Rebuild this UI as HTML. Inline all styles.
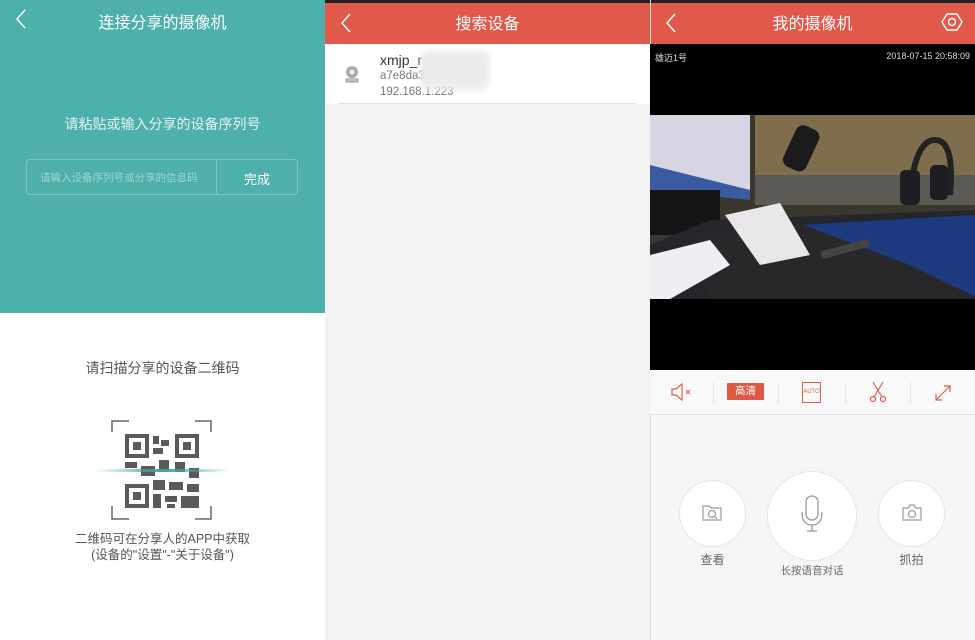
<!DOCTYPE html>
<html><head><meta charset="utf-8"><style>
*{margin:0;padding:0;box-sizing:border-box}
body{width:975px;height:640px;position:relative;overflow:hidden;font-family:"Liberation Sans","Noto Sans CJK SC",sans-serif;background:#fff}
.a{position:absolute}
.t{position:absolute;white-space:nowrap}
</style></head><body>
<!-- panel 1 -->
<div class="a" style="left:0;top:0;width:325px;height:313px;background:#4eb0ab"></div>
<svg class="a" style="left:14px;top:8px" width="14" height="22"><path d="M11 2 L3 11 L11 20" stroke="#fff" stroke-width="1.5" fill="none"/></svg>
<div class="t" style="left:0;width:325px;text-align:center;top:9px;font-size:16px;color:#fff">连接分享的摄像机</div>
<div class="t" style="left:0;width:325px;text-align:center;top:114px;font-size:14px;color:#e4f3f1">请粘贴或输入分享的设备序列号</div>
<div class="a" style="left:26px;top:159px;width:272px;height:36px;border:1px solid #79c4be;border-radius:4px"></div>
<div class="a" style="left:216px;top:160px;width:1px;height:34px;background:#79c4be"></div>
<div class="t" style="left:40px;top:170px;font-size:10.5px;color:#9ed3cf">请输入设备序列号或分享的信息码</div>
<div class="t" style="left:216px;width:82px;text-align:center;top:169px;font-size:13px;color:#fff">完成</div>
<div class="t" style="left:0;width:325px;text-align:center;top:358px;font-size:14px;color:#555">请扫描分享的设备二维码</div>
<svg class="a" style="left:95px;top:418px" width="136" height="106">
<g stroke="#666" stroke-width="1.5" fill="none">
<path d="M17 14 V3 H34"/><path d="M100 3 H116 V14"/><path d="M17 88 V101 H34"/><path d="M100 101 H116 V88"/>
</g>
<g fill="#5a5a5a">
<rect x="30" y="16" width="24" height="24"/><rect x="80" y="16" width="24" height="24"/><rect x="30" y="66" width="24" height="24"/>
<rect x="58" y="18" width="6" height="8"/><rect x="66" y="22" width="8" height="6"/><rect x="58" y="30" width="10" height="6"/>
<rect x="30" y="44" width="12" height="6"/><rect x="46" y="48" width="14" height="10"/><rect x="64" y="42" width="10" height="10"/><rect x="80" y="44" width="10" height="10"/><rect x="94" y="50" width="10" height="10"/>
<rect x="58" y="62" width="12" height="10"/><rect x="74" y="64" width="14" height="8"/><rect x="92" y="66" width="12" height="8"/>
<rect x="58" y="76" width="8" height="14"/><rect x="70" y="78" width="12" height="6"/><rect x="86" y="78" width="18" height="12"/><rect x="72" y="86" width="8" height="4"/>
</g>
<g fill="#fff"><rect x="34" y="20" width="16" height="16"/><rect x="84" y="20" width="16" height="16"/><rect x="34" y="70" width="16" height="16"/></g>
<g fill="#5a5a5a"><rect x="38" y="24" width="8" height="8"/><rect x="88" y="24" width="8" height="8"/><rect x="38" y="74" width="8" height="8"/></g>
<defs><linearGradient id="g" x1="0" x2="1"><stop offset="0" stop-color="#4eb0ab" stop-opacity="0"/><stop offset=".5" stop-color="#3aa39c"/><stop offset="1" stop-color="#4eb0ab" stop-opacity="0"/></linearGradient></defs>
<rect x="0" y="51" width="136" height="3" fill="url(#g)"/>
</svg>
<div class="t" style="left:0;width:325px;text-align:center;top:531px;font-size:12.5px;color:#555;line-height:16px">二维码可在分享人的APP中获取<br>(设备的"设置"-"关于设备")</div>

<!-- panel 2 -->
<div class="a" style="left:325px;top:0;width:325px;height:640px;background:#f2f2f2"></div>
<div class="a" style="left:325px;top:0;width:325px;height:3px;background:#222"></div>
<div class="a" style="left:325px;top:3px;width:325px;height:41px;background:#e0594b"></div>
<svg class="a" style="left:339px;top:12px" width="14" height="22"><path d="M11 2 L3 11 L11 20" stroke="#fff" stroke-width="1.5" fill="none"/></svg>
<div class="t" style="left:325px;width:325px;text-align:center;top:10px;font-size:16px;color:#fff">搜索设备</div>
<div class="a" style="left:325px;top:44px;width:325px;height:60px;background:#fff;"></div>
<div class="a" style="left:338px;top:103px;width:298px;height:1px;background:#e2e2e2"></div>
<svg class="a" style="left:342px;top:63px" width="20" height="22"><circle cx="10" cy="9" r="6" fill="#aaa"/><circle cx="10" cy="9" r="2.5" fill="#eee"/><rect x="3" y="15" width="14" height="5" rx="2" fill="#bbb"/></svg>
<div class="t" style="left:380px;top:52px;font-size:14px;color:#333">xmjp_r</div>
<div class="t" style="left:380px;top:70px;font-size:11.5px;color:#777">a7e8da3</div>
<div class="t" style="left:380px;top:86px;font-size:11.5px;color:#777">192.168.1.223</div>
<div class="a" style="left:420px;top:50px;width:70px;height:40px;background:#ececec;border-radius:10px;filter:blur(3px)"></div>
<div class="a" style="left:650px;top:0;width:1px;height:640px;background:#ddd"></div>

<!-- panel 3 -->
<div class="a" style="left:651px;top:0;width:324px;height:640px;background:#f6f6f6"></div>
<div class="a" style="left:651px;top:0;width:324px;height:3px;background:#222"></div>
<div class="a" style="left:651px;top:3px;width:324px;height:41px;background:#e0594b"></div>
<svg class="a" style="left:664px;top:12px" width="14" height="22"><path d="M11 2 L3 11 L11 20" stroke="#fff" stroke-width="1.5" fill="none"/></svg>
<div class="t" style="left:650px;width:325px;text-align:center;top:10px;font-size:16px;color:#fff">我的摄像机</div>
<svg class="a" style="left:940px;top:11px" width="24" height="22"><path d="M7 3 H17 L22 11 L17 19 H7 L2 11 Z" stroke="#fff" stroke-width="1.4" fill="none" stroke-linejoin="round"/><circle cx="12" cy="11" r="3.5" stroke="#fff" stroke-width="1.4" fill="none"/></svg>
<div class="a" style="left:650px;top:44px;width:325px;height:326px;background:#000"></div>
<div class="t" style="left:655px;top:51px;font-size:9px;color:#ddd">雄迈1号</div>
<div class="t" style="right:5px;top:51px;font-size:9px;color:#ddd">2018-07-15 20:58:09</div>
<svg class="a" style="left:650px;top:115px" width="325" height="184" viewBox="0 0 325 184">
<rect width="325" height="184" fill="#3a372c"/>
<rect x="105" y="0" width="220" height="70" fill="#7e6e4e"/>
<rect x="105" y="60" width="220" height="30" fill="#5b5a54"/>
<path d="M0 0 H100 V80 L0 65 Z" fill="#d8d6e4"/>
<path d="M0 50 L100 75 V85 L0 75Z" fill="#3b5ba0"/>
<rect x="0" y="75" width="70" height="45" fill="#151515"/>
<path d="M0 130 L60 105 L325 95 V184 H0Z" fill="#25262c"/>
<path d="M150 110 L325 100 V184 H280 Z" fill="#1d3a80"/>
<path d="M40 120 L140 105 L260 150 L330 184 H60 Z" fill="#28282a"/>
<path d="M75 100 L130 88 L160 140 L110 150 Z" fill="#e9e6ea"/>
<path d="M0 140 L60 125 L80 150 L20 184 H0Z" fill="#efeef2"/>
<rect x="140" y="10" width="25" height="45" rx="8" fill="#1b1b1b" transform="rotate(25 150 30)"/>
<path d="M260 80 Q265 25 285 25 Q305 25 300 80" stroke="#222" stroke-width="6" fill="none"/>
<rect x="250" y="55" width="20" height="35" rx="5" fill="#1e1e22"/><rect x="280" y="50" width="18" height="35" rx="5" fill="#1e1e22"/>
<rect x="170" y="130" width="50" height="8" rx="3" fill="#444" transform="rotate(-15 195 134)"/>
</svg>
<div class="a" style="left:650px;top:370px;width:325px;height:45px;background:#f9f9f9;border-bottom:1px solid #e3e3e3"></div>
<div class="a" style="left:713px;top:382px;width:1px;height:22px;background:#e5e5e5"></div>
<div class="a" style="left:778px;top:382px;width:1px;height:22px;background:#e5e5e5"></div>
<div class="a" style="left:845px;top:382px;width:1px;height:22px;background:#e5e5e5"></div>
<div class="a" style="left:910px;top:382px;width:1px;height:22px;background:#e5e5e5"></div>
<svg class="a" style="left:670px;top:383px" width="24" height="18"><path d="M2 6 H6 L12 1 V17 L6 12 H2 Z" stroke="#d9604f" stroke-width="1.2" fill="none"/><path d="M16 7 L20 11 M20 7 L16 11" stroke="#d9604f" stroke-width="1.2"/></svg>
<div class="t" style="left:727px;top:383px;width:37px;height:17px;background:#df5745;color:#fff;font-size:10.5px;text-align:center;line-height:17px;border-radius:1px">高清</div>
<div class="t" style="left:802px;top:382px;width:19px;height:21px;border:1px solid #d9604f;color:#d9604f;font-size:6px;text-align:center;line-height:19px">AUTO</div>
<svg class="a" style="left:868px;top:381px" width="20" height="22"><path d="M5 1 L14 16 M15 1 L6 16" stroke="#d9604f" stroke-width="1.2"/><circle cx="5" cy="18" r="2.5" stroke="#d9604f" fill="none" stroke-width="1.2"/><circle cx="15" cy="18" r="2.5" stroke="#d9604f" fill="none" stroke-width="1.2"/></svg>
<svg class="a" style="left:933px;top:383px" width="20" height="20"><path d="M3 17 L17 3 M11 3 H17 V9 M3 11 V17 H9" stroke="#d9604f" stroke-width="1.2" fill="none"/></svg>
<div class="a" style="left:679px;top:480px;width:67px;height:67px;border-radius:50%;background:#fff;border:1px solid #e6e6e6"></div>
<div class="a" style="left:767px;top:471px;width:90px;height:90px;border-radius:50%;background:#fff;border:1px solid #e6e6e6"></div>
<div class="a" style="left:878px;top:480px;width:67px;height:67px;border-radius:50%;background:#fff;border:1px solid #e6e6e6"></div>
<svg class="a" style="left:701px;top:503px" width="22" height="20"><path d="M2 3 H8 L10 5 H20 V17 H2 Z" stroke="#999" stroke-width="1.2" fill="none"/><circle cx="11" cy="11" r="3.5" stroke="#999" stroke-width="1.2" fill="none"/><path d="M13.5 13.5 L16 16" stroke="#999" stroke-width="1.2"/></svg>
<svg class="a" style="left:800px;top:495px" width="24" height="40"><rect x="6" y="1" width="12" height="24" rx="6" stroke="#999" stroke-width="1.3" fill="none"/><path d="M2 17 Q2 30 12 30 Q22 30 22 17 M12 30 V36 M7 36 H17" stroke="#999" stroke-width="1.3" fill="none"/></svg>
<svg class="a" style="left:901px;top:504px" width="22" height="18"><path d="M2 4 H7 L9 1 H13 L15 4 H20 V16 H2 Z" stroke="#999" stroke-width="1.2" fill="none"/><circle cx="11" cy="10" r="3.5" stroke="#999" stroke-width="1.2" fill="none"/></svg>
<div class="t" style="left:679px;width:67px;text-align:center;top:551px;font-size:12px;color:#666">查看</div>
<div class="t" style="left:762px;width:100px;text-align:center;top:563px;font-size:10.5px;color:#666">长按语音对话</div>
<div class="t" style="left:878px;width:67px;text-align:center;top:551px;font-size:12px;color:#666">抓拍</div>
</body></html>
